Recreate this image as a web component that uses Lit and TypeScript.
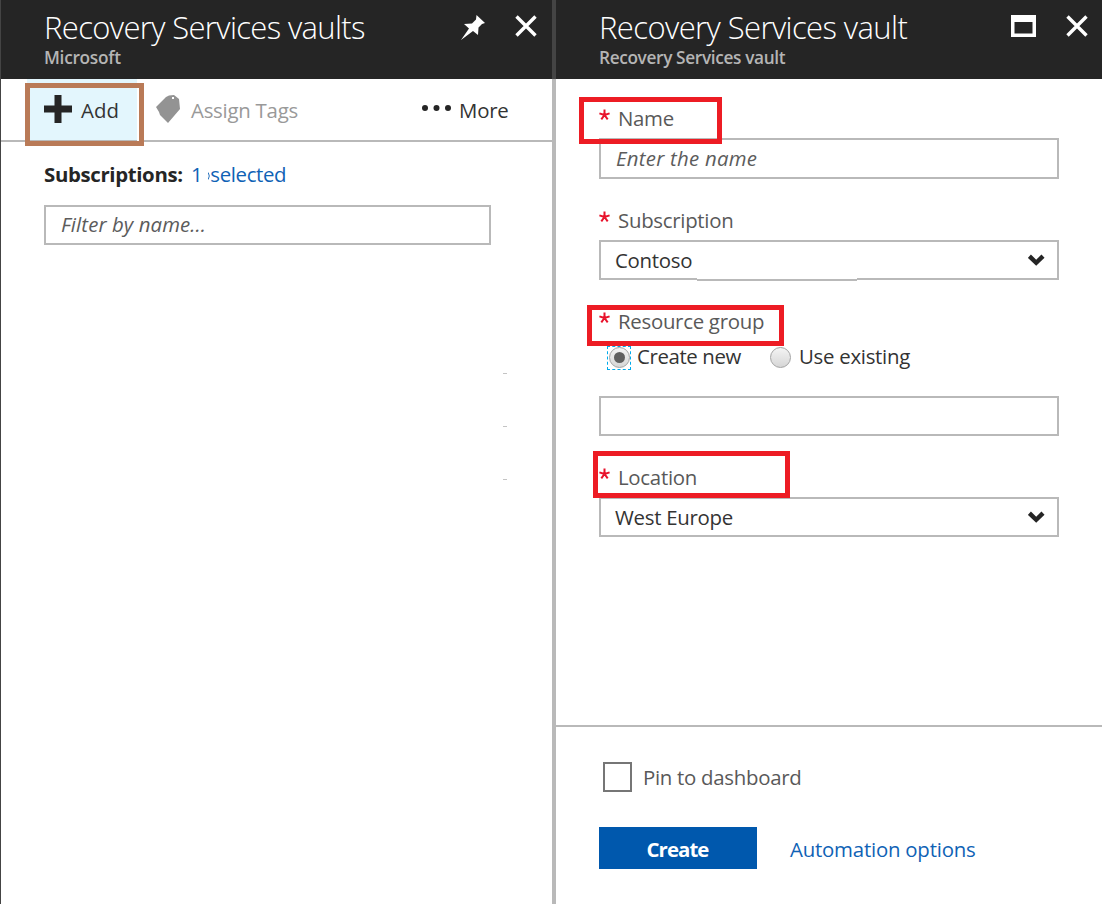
import { LitElement, html, css } from "lit";
import { customElement } from "lit/decorators.js";

const closeIcon = html`<svg class="close" width="22" height="22" viewBox="0 0 22 22"><path d="M1.5 1.5L20.5 20.5M20.5 1.5L1.5 20.5" stroke="#fff" stroke-width="3.4" fill="none"/></svg>`;
const chevron = html`<svg width="17" height="12" viewBox="0 0 17 12"><path d="M1.4 2.2L8.2 8.8L15 2.2" stroke="#252525" stroke-width="4.4" fill="none"/></svg>`;
const star = html`<svg width="11" height="12" viewBox="0 0 11 12"><path d="M5.5 6V.5M5.5 6L.4 4.4M5.5 6L10.6 4.4M5.5 6L2.3 10.4M5.5 6L8.700 10.4" stroke="#e8112a" stroke-width="2" fill="none"/></svg>`;

@customElement("app-root")
export class AppRoot extends LitElement {
  static styles = css`
    :host { display: block; width: 1102px; height: 909px; background: #fff; overflow: hidden;
      font-family: "Open Sans", "Noto Sans", sans-serif; font-size: 20.4px; line-height: 28px; letter-spacing: -0.28px; color: #333; white-space: nowrap; }
    * { box-sizing: border-box; }
    svg { display: block; flex: none; }
    .shell { display: flex; height: 904px; border-left: 1px solid #444; }
    .blade { display: flex; flex-direction: column; }
    .left { width: 551px; }
    .right { width: 546px; }
    .divider { width: 4px; background: linear-gradient(#444 79px, #b9b9b9 79px); }
    header { height: 79px; flex: none; background: #252525; display: flex; justify-content: space-between; padding: 7px 14px 0 43px; }
    .left header { padding-right: 15px; }
    header h1 { margin: 0; font-size: 31px; font-weight: 300; line-height: 41px; letter-spacing: -0.64px; color: #fff; }
    .right header h1 { letter-spacing: -0.59px; }
    header p { margin: 0; font-size: 17.25px; font-weight: 600; line-height: 20px; letter-spacing: -0.36px; color: #b5b5b5; }
    .left header p { letter-spacing: -0.28px; }
    .actions { display: flex; padding-top: 8px; gap: 30px; }
    .toolbar { height: 63px; flex: none; border-bottom: 2px solid #b9b9b9; display: flex; align-items: center; padding-left: 26px; }
    .add { position: relative; width: 110px; height: 61px; background: #e3f6fd; display: flex; align-items: center; padding-left: 17px; gap: 9px; letter-spacing: 0.1px; }
    .add svg, .tags svg { margin-top: -2px; }
    .mark { position: absolute; border: 5px solid #ed1c24; }
    .add .mark { border-color: #b97a57; left: -2px; top: 4px; width: 119px; height: 63px; }
    .add .mark::after { content: ""; position: absolute; left: 107px; top: 0; width: 2px; height: 53px; background: #fff; }
    .mark-name { left: -20px; top: -7px; width: 143px; height: 47px; }
    .mark-group { left: -12px; top: -2px; width: 197px; height: 41px; }
    .mark-location { left: -6px; top: -12px; width: 197px; height: 47px; }
    .tags { display: flex; align-items: center; gap: 11px; margin-left: 19px; width: 266px; color: #999; letter-spacing: -0.25px; }
    .tags span, .add span, .more span { margin-top: 1px; }
    .more { display: flex; align-items: center; gap: 8px; letter-spacing: -0.2px; }
    .more svg { margin-top: -4px; }
    .filter { padding: 17px 0 0 43px; }
    .subs { display: flex; line-height: 30px; margin-bottom: 16px; align-items: center; }
    .subs b { width: 147px; color: #252525; font-weight: 700; letter-spacing: -0.35px; }
    .subs a { display: flex; align-items: center; color: #0f62b5; letter-spacing: -0.35px; }
    .subs a svg { margin: 4px 0 0 6px; }
    .auto { color: #0f62b5; letter-spacing: -0.21px; }
    .box { position: relative; border: 2px solid #b9b9b9; height: 40px; display: flex; align-items: center; justify-content: space-between; padding: 0 12px 0 14px; }
    .ph { font-style: italic; color: #5c5c5c; letter-spacing: 0.25px; padding-left: 15px; }
    .name { height: 41px; padding-bottom: 2px; }
    .filter .box { width: 447px; padding-bottom: 2px; letter-spacing: 0.1px; }
    .ticks { display: grid; row-gap: 52px; margin: 128px 0 0 502px; }
    .ticks i { width: 4px; height: 1px; background: #c4c4c4; }
    .form { padding: 25px 43px 0; flex: 1; }
    .label { position: relative; height: 28px; display: flex; color: #595959; margin-bottom: 6px; z-index: 1; }
    .label svg { margin: 5px 8px 0 0; }
    .gap { margin-top: 27px; }
    .bump { position: absolute; left: 96px; bottom: -3px; width: 160px; height: 3px; border-bottom: 2px solid #b9b9b9; background: #fff; }
    .radios { display: flex; align-items: center; height: 24px; margin: 11px 0 26px 8px; }
    .first { width: 163px; display: flex; align-items: center; letter-spacing: -0.38px; }
    .second { display: flex; align-items: center; gap: 8px; }
    .second .radio { margin-top: -1px; }
    .focus { width: 24px; height: 24px; display: flex; justify-content: flex-start; align-items: center; border: 1px dashed #00abec; margin-right: 6px; }
    .radio { width: 21px; height: 21px; border-radius: 50%; border: 1px solid #a3a3a3; background: linear-gradient(#f4f4f4, #d6d6d6); display: flex; align-items: center; justify-content: center; flex: none; }
    .dot { width: 11px; height: 11px; border-radius: 50%; background: #606060; }
    .focus .radio { margin-left: 1px; margin-top: -1px; }
    .radios span { margin-top: -4px; }
    footer { border-top: 2px solid #b9b9b9; height: 179px; padding: 35px 43px 0; }
    .pin { display: flex; align-items: center; height: 30px; gap: 11px; color: #595959; padding-left: 4px; }
    .check { width: 29px; height: 30px; border: 2px solid #767676; }
    .buttons { display: flex; align-items: center; margin-top: 35px; gap: 33px; }
    .create { width: 158px; height: 42px; background: #0058ad; color: #fff; font-weight: 700; letter-spacing: -0.95px; display: flex; align-items: center; justify-content: center; padding: 1px 1px 0 0; }
    .auto { padding-top: 2px; }
  `;

  render() {
    return html`<div class="shell">
      <section class="blade left">
        <header><div><h1>Recovery Services vaults</h1><p>Microsoft</p></div>
          <div class="actions"><svg width="24" height="25" viewBox="0 0 24 25"><path d="M15.500 0L24 8L21 9L17.500 12.500L17 20L12 16L0 25L8 13.500L3 9L11 8.500L15 4.500Z" fill="#fff"/></svg>${closeIcon}</div></header>
        <div class="toolbar">
          <div class="add"><svg width="28" height="28" viewBox="0 0 28 28"><path d="M10.500 0h7v10.500h10.500v7h-10.500v10.500h-7v-10.500h-10.500v-7h10.500z" fill="#252525"/></svg><span>Add</span><div class="mark"></div></div>
          <div class="tags"><svg width="24" height="28" viewBox="0 0 24 28"><path d="M0 12L10 2L13 .5L18 0L23 4L24 14L12 28L4 20L3 17Z" fill="#939393"/><path d="M16 3h2" stroke="#fff" stroke-width="2"/></svg><span>Assign Tags</span></div>
          <div class="more"><svg width="29" height="6" viewBox="0 0 29 6"><circle cx="3" cy="3" r="3" fill="#252525"/><circle cx="14.500" cy="3" r="3" fill="#252525"/><circle cx="26" cy="3" r="3" fill="#252525"/></svg><span>More</span></div>
        </div>
        <div class="filter"><div class="subs"><b>Subscriptions:</b><a><span>1</span><svg width="2" height="8" viewBox="0 0 2 8"><path d="M.2 .5Q2.400 4 .2 7.500" stroke="#0f62b5" stroke-width=".9" fill="none"/></svg><span>selected</span></a></div>
          <div class="box ph">Filter by name...</div></div>
        <div class="ticks"><i></i><i></i><i></i></div>
      </section>
      <div class="divider"></div>
      <section class="blade right">
        <header><div><h1>Recovery Services vault</h1><p>Recovery Services vault</p></div>
          <div class="actions"><svg width="25" height="22" viewBox="0 0 25 22"><path fill-rule="evenodd" d="M0 0H25V22H0ZM3.500 7V18.500H21.500V7Z" fill="#fff"/></svg>${closeIcon}</div></header>
        <div class="form">
          <div class="label">${star}<span>Name</span><div class="mark mark-name"></div></div>
          <div class="box ph name">Enter the name</div>
          <div class="label gap">${star}<span>Subscription</span></div>
          <div class="box"><span>Contoso</span>${chevron}<div class="bump"></div></div>
          <div class="label gap">${star}<span>Resource group</span><div class="mark mark-group"></div></div>
          <div class="radios"><div class="first"><div class="focus"><div class="radio"><div class="dot"></div></div></div><span>Create new</span></div><div class="second"><div class="radio"></div><span>Use existing</span></div></div>
          <div class="box"></div>
          <div class="label gap">${star}<span>Location</span><div class="mark mark-location"></div></div>
          <div class="box"><span>West Europe</span>${chevron}</div>
        </div>
        <footer><div class="pin"><div class="check"></div><span>Pin to dashboard</span></div>
          <div class="buttons"><div class="create">Create</div><span class="auto">Automation options</span></div></footer>
      </section></div>`;
  }
}
